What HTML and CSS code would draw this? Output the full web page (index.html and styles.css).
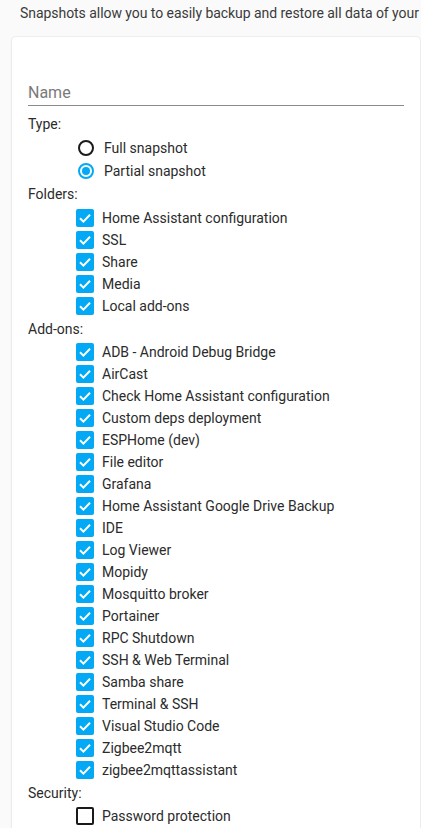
FILE: index.html
```html
<!DOCTYPE html>
<html lang="en">
<head>
<meta charset="utf-8">
<title>Create snapshot</title>
<link rel="stylesheet" href="styles.css">
</head>
<body>
<div class="page">
  <p class="intro">Snapshots allow you to easily backup and restore all data of your</p>
  <div class="card">
    <div class="field"><span class="field-label">Name</span></div>

    <div class="heading">Type:</div>
    <div class="radio-row"><span class="radio"></span>Full snapshot</div>
    <div class="radio-row"><span class="radio checked"></span>Partial snapshot</div>

    <div class="heading">Folders:</div>
    <div class="check-row first"><span class="box checked"><svg viewBox="0 0 18 18"><polyline points="4,9.3 7.4,12.6 14,5.8"/></svg></span>Home Assistant configuration</div>
    <div class="check-row"><span class="box checked"><svg viewBox="0 0 18 18"><polyline points="4,9.3 7.4,12.6 14,5.8"/></svg></span>SSL</div>
    <div class="check-row"><span class="box checked"><svg viewBox="0 0 18 18"><polyline points="4,9.3 7.4,12.6 14,5.8"/></svg></span>Share</div>
    <div class="check-row"><span class="box checked"><svg viewBox="0 0 18 18"><polyline points="4,9.3 7.4,12.6 14,5.8"/></svg></span>Media</div>
    <div class="check-row"><span class="box checked"><svg viewBox="0 0 18 18"><polyline points="4,9.3 7.4,12.6 14,5.8"/></svg></span>Local add-ons</div>

    <div class="heading">Add-ons:</div>
    <div class="check-row"><span class="box checked"><svg viewBox="0 0 18 18"><polyline points="4,9.3 7.4,12.6 14,5.8"/></svg></span>ADB - Android Debug Bridge</div>
    <div class="check-row"><span class="box checked"><svg viewBox="0 0 18 18"><polyline points="4,9.3 7.4,12.6 14,5.8"/></svg></span>AirCast</div>
    <div class="check-row"><span class="box checked"><svg viewBox="0 0 18 18"><polyline points="4,9.3 7.4,12.6 14,5.8"/></svg></span>Check Home Assistant configuration</div>
    <div class="check-row"><span class="box checked"><svg viewBox="0 0 18 18"><polyline points="4,9.3 7.4,12.6 14,5.8"/></svg></span>Custom deps deployment</div>
    <div class="check-row"><span class="box checked"><svg viewBox="0 0 18 18"><polyline points="4,9.3 7.4,12.6 14,5.8"/></svg></span>ESPHome (dev)</div>
    <div class="check-row"><span class="box checked"><svg viewBox="0 0 18 18"><polyline points="4,9.3 7.4,12.6 14,5.8"/></svg></span>File editor</div>
    <div class="check-row"><span class="box checked"><svg viewBox="0 0 18 18"><polyline points="4,9.3 7.4,12.6 14,5.8"/></svg></span>Grafana</div>
    <div class="check-row"><span class="box checked"><svg viewBox="0 0 18 18"><polyline points="4,9.3 7.4,12.6 14,5.8"/></svg></span>Home Assistant Google Drive Backup</div>
    <div class="check-row"><span class="box checked"><svg viewBox="0 0 18 18"><polyline points="4,9.3 7.4,12.6 14,5.8"/></svg></span>IDE</div>
    <div class="check-row"><span class="box checked"><svg viewBox="0 0 18 18"><polyline points="4,9.3 7.4,12.6 14,5.8"/></svg></span>Log Viewer</div>
    <div class="check-row"><span class="box checked"><svg viewBox="0 0 18 18"><polyline points="4,9.3 7.4,12.6 14,5.8"/></svg></span>Mopidy</div>
    <div class="check-row"><span class="box checked"><svg viewBox="0 0 18 18"><polyline points="4,9.3 7.4,12.6 14,5.8"/></svg></span>Mosquitto broker</div>
    <div class="check-row"><span class="box checked"><svg viewBox="0 0 18 18"><polyline points="4,9.3 7.4,12.6 14,5.8"/></svg></span>Portainer</div>
    <div class="check-row"><span class="box checked"><svg viewBox="0 0 18 18"><polyline points="4,9.3 7.4,12.6 14,5.8"/></svg></span>RPC Shutdown</div>
    <div class="check-row"><span class="box checked"><svg viewBox="0 0 18 18"><polyline points="4,9.3 7.4,12.6 14,5.8"/></svg></span>SSH &amp; Web Terminal</div>
    <div class="check-row"><span class="box checked"><svg viewBox="0 0 18 18"><polyline points="4,9.3 7.4,12.6 14,5.8"/></svg></span>Samba share</div>
    <div class="check-row"><span class="box checked"><svg viewBox="0 0 18 18"><polyline points="4,9.3 7.4,12.6 14,5.8"/></svg></span>Terminal &amp; SSH</div>
    <div class="check-row"><span class="box checked"><svg viewBox="0 0 18 18"><polyline points="4,9.3 7.4,12.6 14,5.8"/></svg></span>Visual Studio Code</div>
    <div class="check-row"><span class="box checked"><svg viewBox="0 0 18 18"><polyline points="4,9.3 7.4,12.6 14,5.8"/></svg></span>Zigbee2mqtt</div>
    <div class="check-row"><span class="box checked"><svg viewBox="0 0 18 18"><polyline points="4,9.3 7.4,12.6 14,5.8"/></svg></span>zigbee2mqttassistant</div>

    <div class="heading">Security:</div>
    <div class="check-row"><span class="box"></span>Password protection</div>
  </div>
</div>
</body>
</html>
```

FILE: styles.css
```css
html, body {
  margin: 0;
  padding: 0;
  overflow: hidden;
}

body {
  background: #fafafa;
  font-family: Roboto, "Noto Sans", sans-serif;
  color: #2b2b2b;
}

.page {
  width: 421px;
  height: 828px;
  overflow: hidden;
}

.intro {
  margin: 0;
  padding: 3px 0 0 20px;
  font-size: 14px;
  line-height: 20px;
  color: #3a3a3a;
  white-space: nowrap;
  letter-spacing: -0.05px;
}

.card {
  margin: 14px 0 0 12px;
  width: 408px;
  box-sizing: border-box;
  padding: 16px;
  background: #fff;
  border-radius: 4px;
  box-shadow: 0 0 2px rgba(0, 0, 0, 0.14), 0 1px 3px rgba(0, 0, 0, 0.06);
}

.field {
  height: 53px;
  box-sizing: border-box;
  border-bottom: 1px solid #8a8a8a;
  display: flex;
  align-items: flex-end;
  padding-bottom: 2px;
}

.field-label {
  font-size: 16px;
  line-height: 20px;
  color: #7a7a7a;
}

.heading {
  height: 24px;
  display: flex;
  align-items: center;
  font-size: 14px;
}

.field + .heading {
  margin-top: 6px;
}

.radio-row,
.check-row {
  display: flex;
  align-items: center;
  padding-left: 48px;
  font-size: 14px;
}

.radio-row {
  height: 23px;
}

.check-row {
  height: 22px;
}

.check-row.first {
  height: 23px;
}

.radio {
  width: 16px;
  height: 16px;
  box-sizing: border-box;
  border: 2px solid #1a1a1a;
  border-radius: 50%;
  margin: 0 10px 0 2px;
  display: flex;
  align-items: center;
  justify-content: center;
}

.radio.checked {
  border-color: #03a9f4;
}

.radio.checked::after {
  content: "";
  width: 8px;
  height: 8px;
  border-radius: 50%;
  background: #03a9f4;
}

.box {
  width: 18px;
  height: 18px;
  box-sizing: border-box;
  border: 2px solid #1a1a1a;
  border-radius: 2px;
  margin-right: 8px;
  flex: none;
  display: flex;
}

.box.checked {
  border: none;
  background: #03a9f4;
}

.box svg {
  width: 18px;
  height: 18px;
}

.box polyline {
  fill: none;
  stroke: #fff;
  stroke-width: 2;
}
```
